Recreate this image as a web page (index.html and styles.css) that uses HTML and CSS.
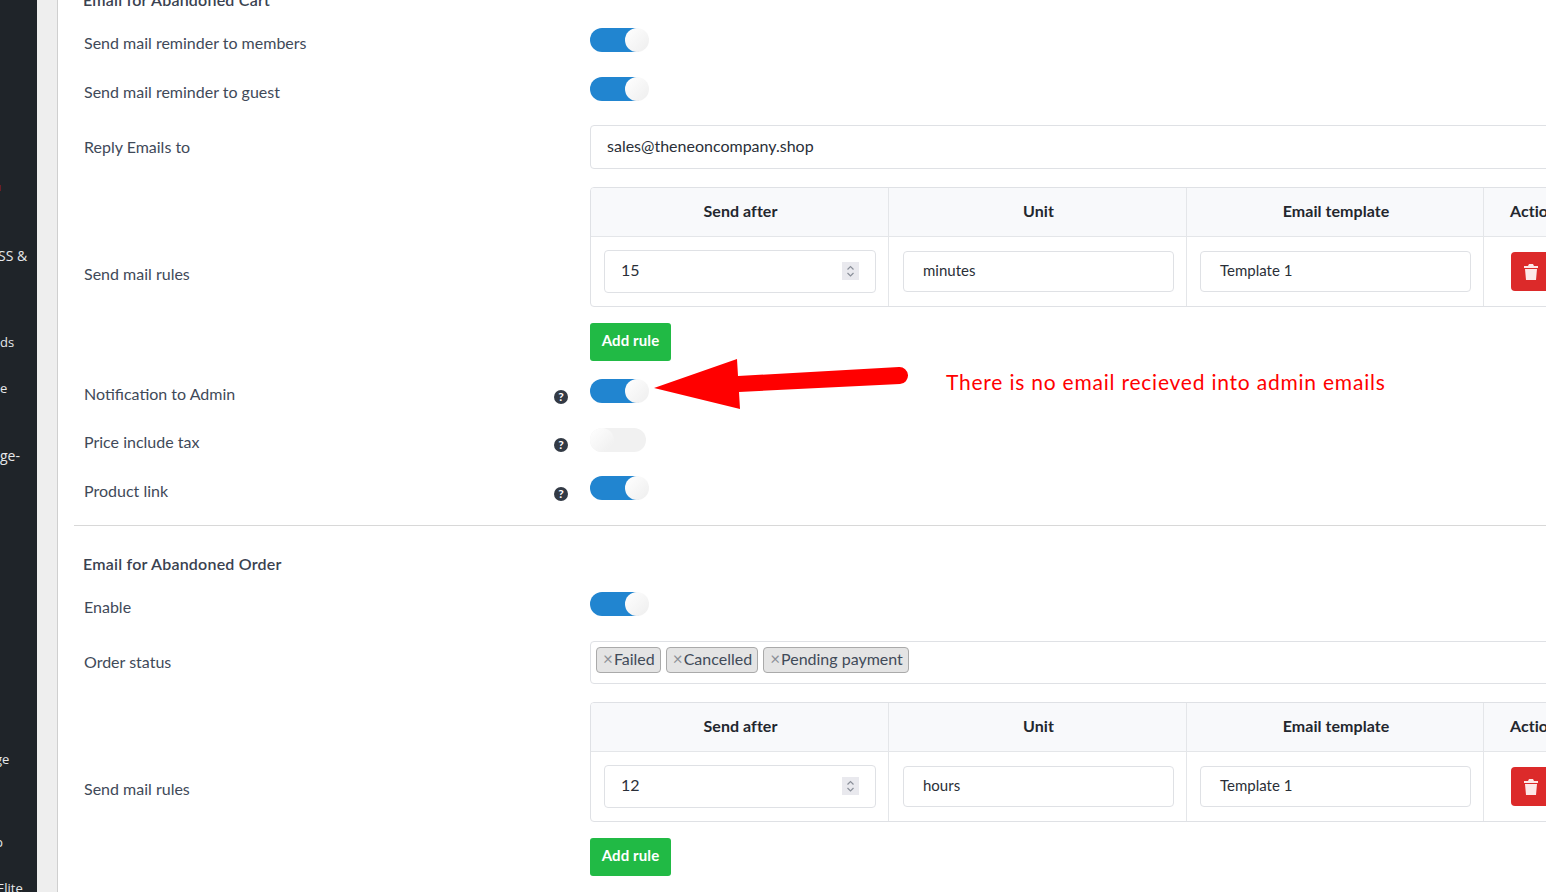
FILE: index.html
```html
<!DOCTYPE html>
<html lang="en">
<head>
<meta charset="utf-8">
<title>Abandoned cart email settings</title>
<link rel="stylesheet" href="styles.css">
</head>
<body>
<div class="page">
  <nav class="sidebar">
    <span class="nav-item nav-mark"></span>
    <span class="nav-item n1">SS &amp;</span>
    <span class="nav-item n2">ds</span>
    <span class="nav-item n3">e</span>
    <span class="nav-item n4">ge-</span>
    <span class="nav-item n5">ge</span>
    <span class="nav-item n6">p</span>
    <span class="nav-item n7">Elite</span>
  </nav>
  <div class="gutter"></div>
  <main class="main">
    <h3 class="heading heading-first">Email for Abandoned Cart</h3>
    <div class="row mb25"><div class="label">Send mail reminder to members</div><div class="control"><span class="toggle on"></span></div></div>
    <div class="row mb24"><div class="label">Send mail reminder to guest</div><div class="control"><span class="toggle on"></span></div></div>
    <div class="row mb18"><div class="label flat">Reply Emails to</div><div class="control"><div class="textbox">sales@theneoncompany.shop</div></div></div>
    <div class="row mb16"><div class="label low">Send mail rules</div><div class="control">
      <div class="rules">
        <div class="cell head">Send after</div><div class="cell head">Unit</div><div class="cell head">Email template</div><div class="cell head">Action</div>
        <div class="cell"><div class="field number">15<span class="spin"><svg viewBox="0 0 17 18" width="17" height="18"><path d="M5.500 7.500 8.500 4.500 11.500 7.500M5.500 11 8.500 14 11.500 11" fill="none" stroke="#8a8f99" stroke-width="1.200"/></svg></span></div></div>
        <div class="cell"><div class="field">minutes</div></div>
        <div class="cell"><div class="field">Template 1</div></div>
        <div class="cell"><span class="del"><svg viewBox="0 0 14 16" width="14" height="16"><path fill="#fde8e8" d="M5 0h4l1 2h4v2H0V2h4zM1 5h12l-1 11H2z"/></svg></span></div>
      </div>
    </div></div>
    <div class="row mb18"><div class="label flat"></div><div class="control"><span class="btn">Add rule</span></div></div>
    <div class="row mb25"><div class="label">Notification to Admin<span class="help">?</span></div><div class="control"><span class="toggle on"></span></div></div>
    <div class="row mb24"><div class="label up">Price include tax<span class="help">?</span></div><div class="control"><span class="toggle"></span></div></div>
    <div class="row mb25"><div class="label">Product link<span class="help">?</span></div><div class="control"><span class="toggle on"></span></div></div>
    <hr class="divider">
    <h3 class="heading heading-second">Email for Abandoned Order</h3>
    <div class="row mb25"><div class="label">Enable</div><div class="control"><span class="toggle on"></span></div></div>
    <div class="row mb18"><div class="label flat up">Order status</div><div class="control">
      <div class="tagbox"><span class="tag"><i>×</i>Failed</span><span class="tag"><i>×</i>Cancelled</span><span class="tag"><i>×</i>Pending payment</span></div>
    </div></div>
    <div class="row mb16"><div class="label low">Send mail rules</div><div class="control">
      <div class="rules">
        <div class="cell head">Send after</div><div class="cell head">Unit</div><div class="cell head">Email template</div><div class="cell head">Action</div>
        <div class="cell"><div class="field number">12<span class="spin"><svg viewBox="0 0 17 18" width="17" height="18"><path d="M5.500 7.500 8.500 4.500 11.500 7.500M5.500 11 8.500 14 11.500 11" fill="none" stroke="#8a8f99" stroke-width="1.200"/></svg></span></div></div>
        <div class="cell"><div class="field">hours</div></div>
        <div class="cell"><div class="field">Template 1</div></div>
        <div class="cell"><span class="del"><svg viewBox="0 0 14 16" width="14" height="16"><path fill="#fde8e8" d="M5 0h4l1 2h4v2H0V2h4zM1 5h12l-1 11H2z"/></svg></span></div>
      </div>
    </div></div>
    <div class="row"><div class="label flat"></div><div class="control"><span class="btn">Add rule</span></div></div>
  </main>
  <svg class="arrow" viewBox="0 0 260 56" width="260" height="56"><path fill="#ff0000" d="M1 29 84 0 85 17 246 8A8.500 8.500 0 0 1 247 25L86 33 87 50Z"/></svg>
  <div class="note">There is no email recieved into admin emails</div>
</div>
</body>
</html>
```
FILE: styles.css
```css
* { box-sizing: border-box; }
html, body { margin: 0; height: 892px; overflow: hidden; background: #fff; }
body { font-family: Lato, "Liberation Sans", sans-serif; font-size: 16px; color: #3f4a59; }
.page { display: flex; height: 892px; overflow: hidden; position: relative; }

.sidebar { flex: 0 0 37px; background: #1f2429; color: #e6e8ea; font-family: "Open Sans", sans-serif; font-size: 13px; overflow: hidden; display: flex; flex-direction: column; }
.nav-item { display: block; height: 18px; line-height: 18px; white-space: nowrap; flex: none; }
.nav-mark { width: 1px; height: 6px; margin-top: 185px; background: #6b1f26; }
.n1 { margin-top: 56px; width: 28px; font-size: 14px; text-align: right; margin-left: -2px; }
.n2 { margin-top: 68px; }
.n3 { margin-top: 28px; }
.n4 { margin-top: 50px; margin-left: 0; font-size: 14px; }
.n5 { margin-top: 285px; margin-left: -5px; }
.n6 { margin-top: 65px; margin-left: -5px; }
.n7 { margin-top: 28px; margin-left: -3px; }

.gutter { flex: 0 0 21px; background: #eeeeee; border-right: 1px solid #cfcfcf; }
.main { flex: 1 1 auto; min-width: 0; padding-left: 16px; overflow: hidden; }

.heading { margin: 0 0 0 9px; font-size: 16px; line-height: 24px; font-weight: 600; letter-spacing: 0.22px; color: #3a4250; }
.heading-first { margin-top: -12px; margin-bottom: 16px; }
.heading-second { margin-top: 26px; margin-bottom: 16px; }

.row { display: grid; grid-template-columns: 484px 1fr; column-gap: 22px; margin-left: 10px; align-items: center; }
.mb16 { margin-bottom: 16px; }
.mb18 { margin-bottom: 18px; }
.mb24 { margin-bottom: 24px; }
.mb25 { margin-bottom: 25px; }
.label { display: flex; justify-content: space-between; align-items: center; padding-top: 6px; margin-block: -10px; line-height: 20px; }
.label.flat { padding-top: 0; margin-block: 0; }
.label.up { padding-bottom: 2px; }
.label.low { padding-top: 0; margin-block: 0; align-self: end; margin-bottom: 23px; }
.control { min-width: 0; display: flex; align-items: center; }

.toggle { display: block; position: relative; width: 56px; height: 24px; border-radius: 12px; background: #f1f1f1; }
.toggle::after { content: ""; position: absolute; top: 0; left: 0; width: 24px; height: 24px; border-radius: 50%; background: linear-gradient(135deg, #fff, #eeeeee); }
.toggle.on { background: #2185d0; }
.toggle.on::after { left: 35px; }

.textbox { width: 1100px; height: 44px; flex: none; border: 1px solid #dfe1e5; border-radius: 4px; padding: 0 16px; line-height: 40px; color: #2a2f38; }

.rules { flex: none; display: grid; grid-template-columns: 298px 298px 297px 100px; grid-template-rows: 49px 69px; width: 1000px; border: 1px solid #dfe1e5; border-radius: 4px; overflow: hidden; margin-right: -100px; }
.cell { display: flex; align-items: center; padding: 0 12px 0 13px; border-right: 1px solid #e4e6e9; }
.cell:nth-child(6) { padding-left: 14px; }
.cell.head { justify-content: center; background: #f8f9fb; border-bottom: 1px solid #e4e6e9; font-weight: 700; color: #23272e; padding: 0 0 4px 2px; letter-spacing: 0.05px; }
.cell:nth-child(4n) { border-right: 0; padding-left: 27px; }
.cell.head:nth-child(4n) { justify-content: flex-start; padding-left: 26px; }
.field { flex: 1; height: 41px; border: 1px solid #dfe1e5; border-radius: 4px; padding: 0 19px; line-height: 37px; font-size: 15px; color: #2a2f38; }
.field.number { flex: none; width: 272px; height: 43px; font-size: 16px; padding: 0 16px; line-height: 38px; position: relative; }
.spin { position: absolute; right: 16px; top: 11px; width: 17px; height: 18px; background: #e9e9ee; display: block; }
.spin svg { display: block; }
.del { width: 40px; height: 39px; flex: none; display: flex; align-items: center; justify-content: center; background: #dc2a2a; border-radius: 4px; }

.btn { display: block; width: 81px; height: 38px; background: #21ba45; color: #fff; font-weight: 700; font-size: 15px; line-height: 35px; letter-spacing: 0.1px; text-align: center; border-radius: 3px; }

.help { width: 14px; height: 14px; flex: none; margin-top: 5px; border-radius: 50%; background: #333a45; color: #fff; font-size: 12px; font-weight: 700; line-height: 14px; text-align: center; }

.divider { margin: 0; border: 0; border-top: 1px solid #d8d8d8; }

.tagbox { flex: none; width: 1100px; height: 43px; border: 1px solid #dfe1e5; border-radius: 4px; padding: 5px; display: flex; gap: 5px; align-items: flex-start; }
.tag { display: block; height: 26px; border: 1px solid #aaaaaa; border-radius: 4px; background: #e4e4e4; padding: 0 5px 0 6px; line-height: 22px; color: #414b59; white-space: nowrap; }
.tag i { font-style: normal; color: #8b8f96; margin-right: 1px; font-size: 17px; }

.arrow { position: absolute; left: 653px; top: 359px; }
.note { position: absolute; left: 946px; top: 368px; font-size: 21px; line-height: 28px; letter-spacing: 0.78px; color: #ff0000; white-space: nowrap; }
```
